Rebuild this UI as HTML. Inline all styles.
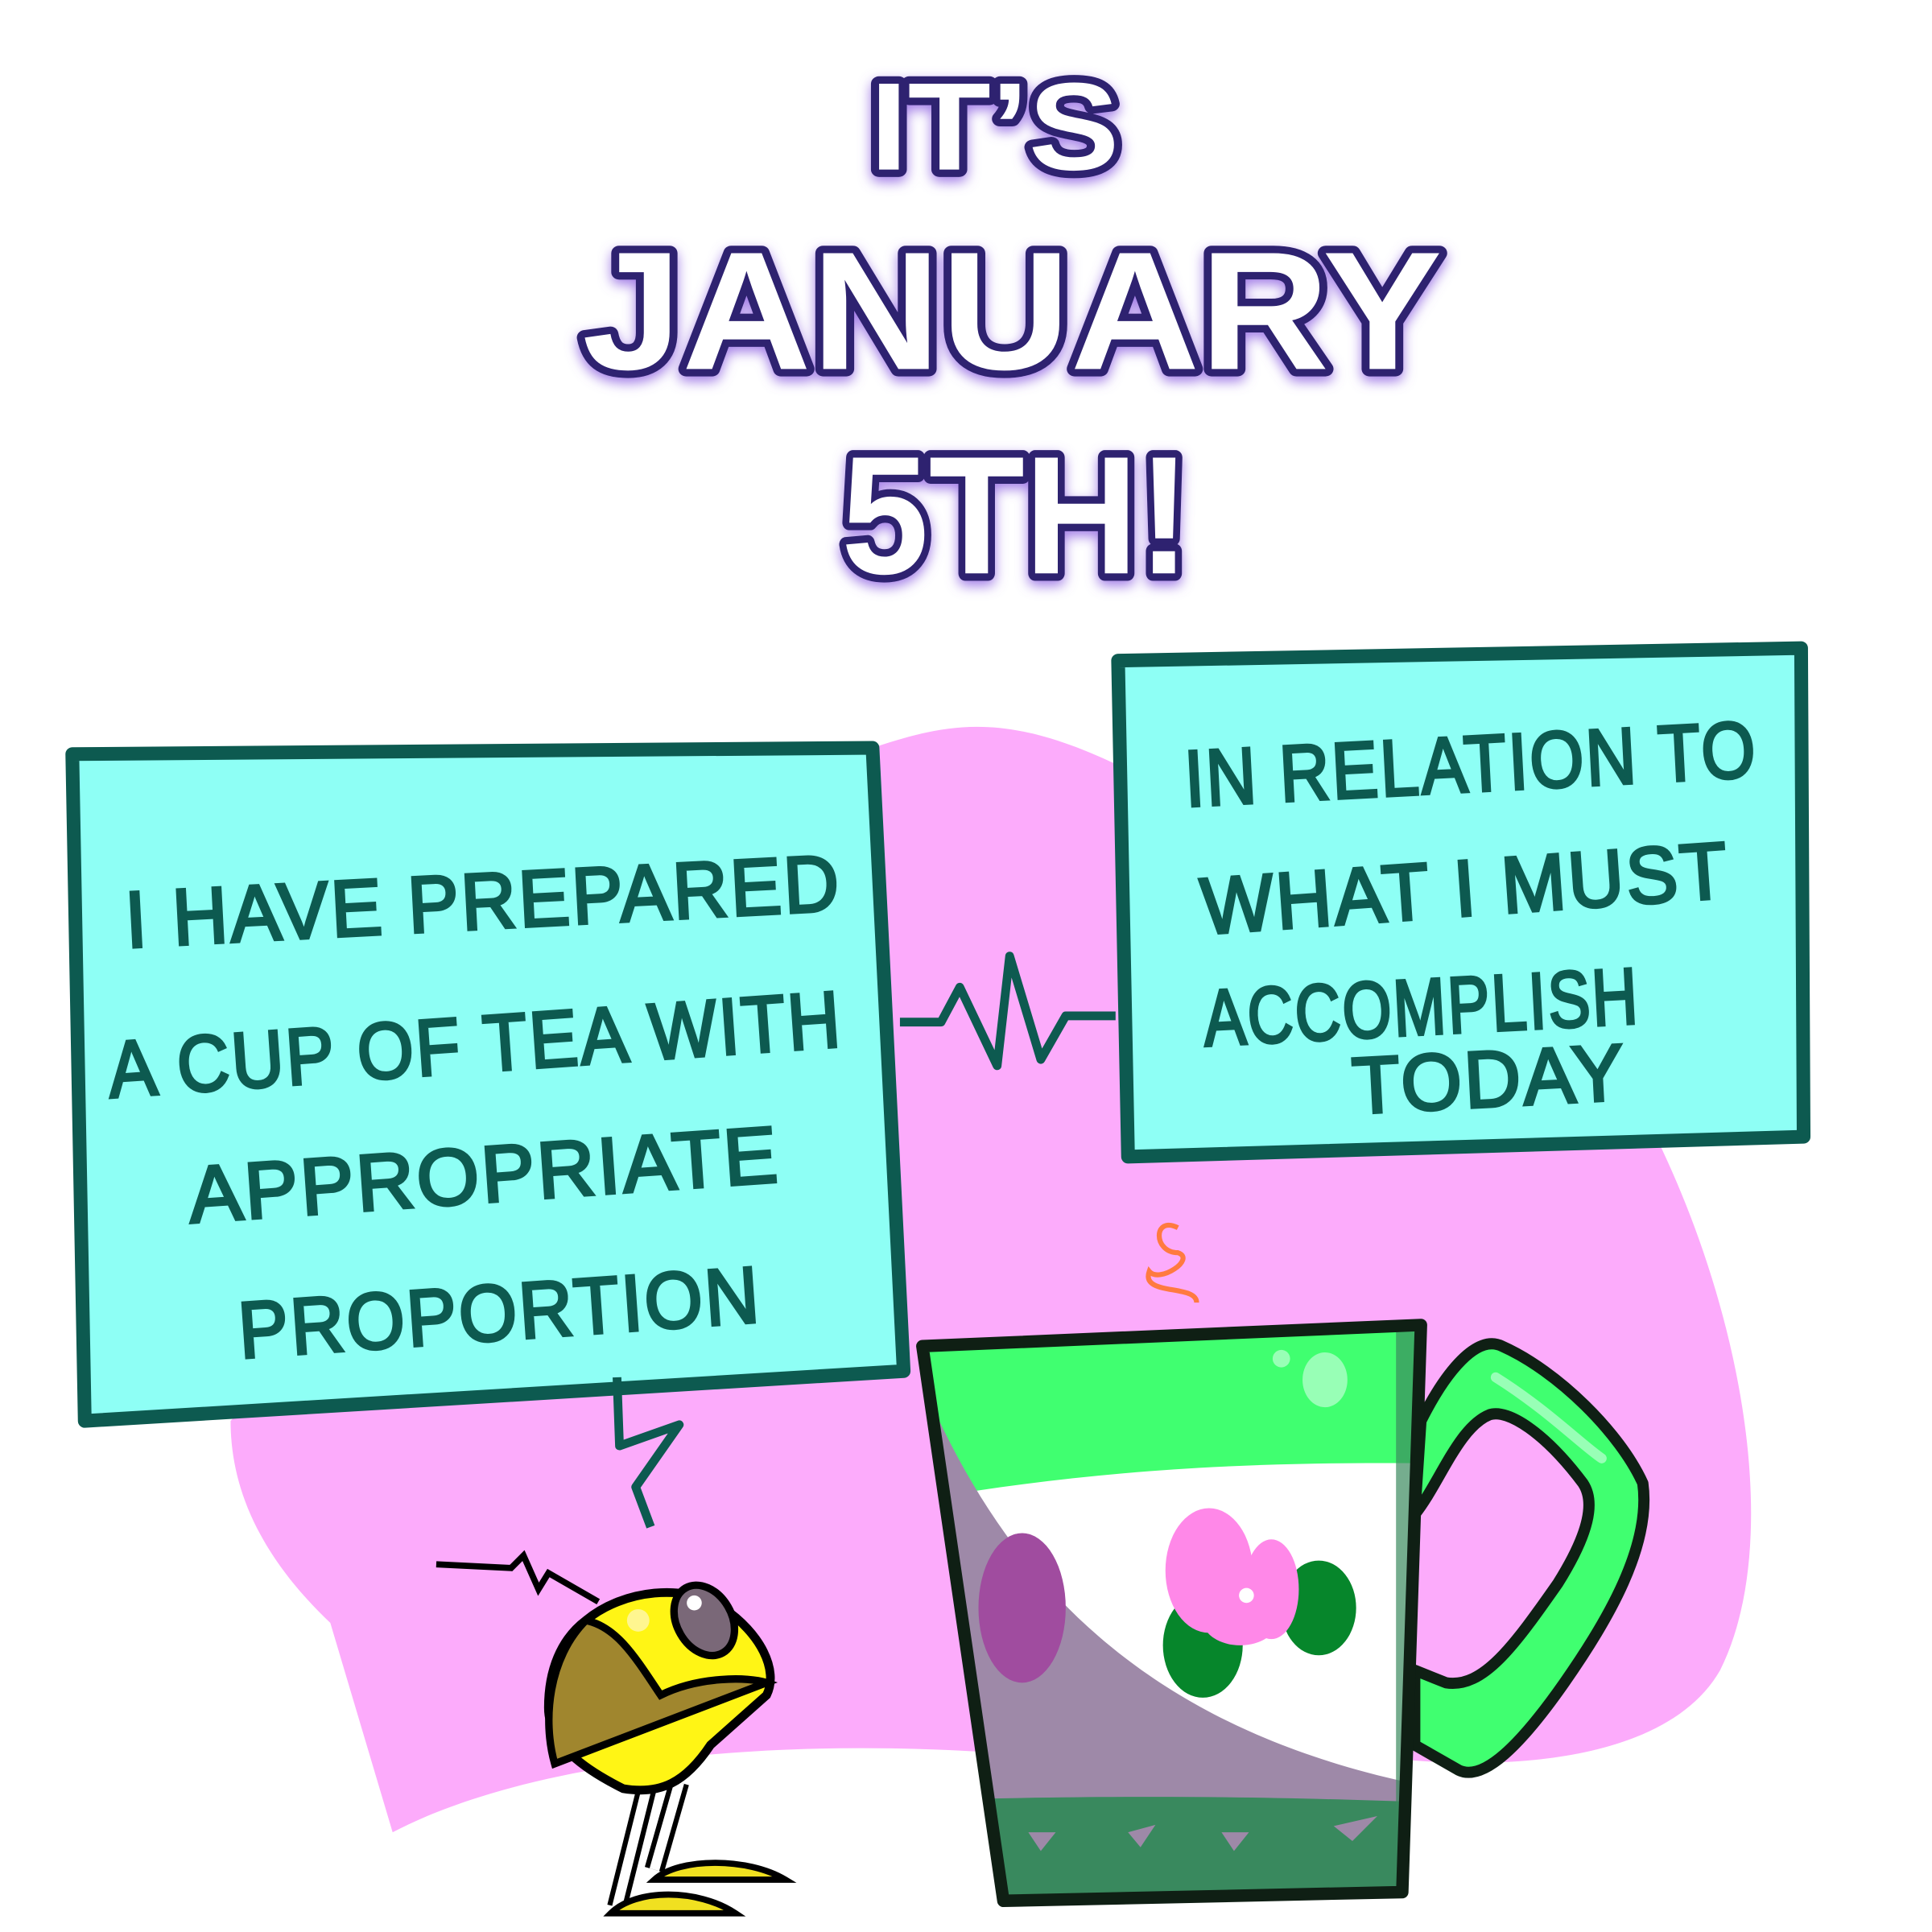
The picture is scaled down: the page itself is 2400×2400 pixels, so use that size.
<!DOCTYPE html>
<html><head><meta charset="utf-8"><style>
html,body{margin:0;padding:0;background:#fff;width:2400px;height:2400px;overflow:hidden}
svg{display:block}
.t{font-family:"Liberation Sans",sans-serif;font-weight:bold;fill:#fff;stroke:#2e2470;stroke-width:12;paint-order:stroke;stroke-linejoin:round}
.h{font-family:"Liberation Sans",sans-serif;fill:#0d5a50;stroke:#0d5a50;stroke-width:2.5;font-size:64px;letter-spacing:2px}
</style></head><body>
<svg width="2400" height="2400" viewBox="0 0 1550 1550" xmlns="http://www.w3.org/2000/svg">
<defs><filter id="g" x="-10%" y="-20%" width="120%" height="140%"><feDropShadow dx="0" dy="4" stdDeviation="5" flood-color="#8a5ce0" flood-opacity="0.8"/></filter></defs>
<g filter="url(#g)">
<text class="t" x="798" y="136" font-size="100" text-anchor="middle" textLength="200" lengthAdjust="spacingAndGlyphs">IT’S</text>
<text class="t" x="812" y="296" font-size="135" text-anchor="middle" textLength="690" lengthAdjust="spacingAndGlyphs">JANUARY</text>
<text class="t" x="815" y="460" font-size="135" text-anchor="middle" textLength="280" lengthAdjust="spacingAndGlyphs">5TH!</text>
</g>
<path d="M700 600 C820 560 880 565 1330 915 C1400 1060 1430 1240 1380 1340 C1340 1410 1220 1420 1130 1412 L780 1405 C600 1395 420 1415 315 1470 L265 1302 C205 1245 185 1190 185 1140 Z" fill="#fcabfb"/>
<polygon points="58,605 700,600 725,1100 68,1140" fill="#8efff5" stroke="#0d5a50" stroke-width="11" stroke-linejoin="round"/>
<polygon points="897,530 1445,520 1447,912 905,928" fill="#8efff5" stroke="#0d5a50" stroke-width="11" stroke-linejoin="round"/>
<path d="M722 820 L755 820 L770 792 L800 855 L810 767 L835 850 L855 815 L895 815" fill="none" stroke="#0d5a50" stroke-width="7" stroke-linejoin="round"/>
<path d="M495 1105 L497 1160 L545 1143 L510 1193 L522 1225" fill="none" stroke="#0d5a50" stroke-width="7" stroke-linejoin="round"/>
<g class="h">
<text x="100" y="745" transform="rotate(-3 390 720)" textLength="575" lengthAdjust="spacingAndGlyphs">I HAVE PREPARED</text>
<text x="85" y="860" transform="rotate(-4 380 820)" textLength="590" lengthAdjust="spacingAndGlyphs">A CUP OF TEA WITH</text>
<text x="150" y="965" transform="rotate(-4 380 930)" textLength="475" lengthAdjust="spacingAndGlyphs">APPROPRIATE</text>
<text x="190" y="1075" transform="rotate(-4 400 1040)" textLength="420" lengthAdjust="spacingAndGlyphs">PROPORTION</text>
<text x="950" y="635" transform="rotate(-3 1180 610)" textLength="460" lengthAdjust="spacingAndGlyphs">IN RELATION TO</text>
<text x="962" y="735" transform="rotate(-4 1170 700)" textLength="425" lengthAdjust="spacingAndGlyphs">WHAT I MUST</text>
<text x="965" y="830" transform="rotate(-3 1140 800)" textLength="350" lengthAdjust="spacingAndGlyphs">ACCOMPLISH</text>
<text x="1085" y="888" transform="rotate(-3 1190 870)" textLength="220" lengthAdjust="spacingAndGlyphs">TODAY</text>
</g>
<path d="M945 985 C925 975 925 1005 945 1005 C960 1010 930 1030 922 1020 C915 1040 960 1030 960 1045" fill="none" stroke="#ff7a40" stroke-width="4"/>
<path d="M1140 1140 C1160 1100 1185 1070 1205 1080 C1250 1100 1300 1150 1318 1190 C1325 1240 1290 1300 1255 1350 C1220 1400 1190 1430 1170 1420 L1135 1400 L1135 1340 L1160 1350 C1190 1355 1215 1320 1250 1270 C1275 1230 1280 1205 1270 1190 C1240 1150 1210 1130 1195 1135 C1170 1145 1155 1190 1135 1215 Z" fill="#40ff70" stroke="#0f1f14" stroke-width="9" stroke-linejoin="round"/>
<path d="M1200 1105 C1240 1130 1270 1160 1285 1170" stroke="#98ffb6" stroke-width="8" stroke-linecap="round" fill="none"/>
<clipPath id="mc"><polygon points="740,1080 1140,1063 1125,1518 805,1525"/></clipPath>
<g clip-path="url(#mc)">
<rect x="700" y="1050" width="500" height="500" fill="#40ff70"/>
<path d="M700 1210 C860 1180 1000 1170 1200 1175 L1200 1450 L700 1450 Z" fill="#fff"/>
<path d="M740 1110 C800 1250 900 1380 1130 1430 L1130 1450 L700 1450 Z" fill="#9e89a8"/>
<path d="M700 1445 C900 1440 1000 1440 1200 1448 L1200 1550 L700 1550 Z" fill="#39895e"/>
<rect x="1120" y="1060" width="30" height="400" fill="#3a8a5e" opacity="0.7"/>
</g>
<polygon points="740,1080 1140,1063 1125,1518 805,1525" fill="none" stroke="#0f1f14" stroke-width="10" stroke-linejoin="round"/>
<ellipse cx="1063" cy="1107" rx="18" ry="22" fill="#98ffb6"/><circle cx="1028" cy="1090" r="7" fill="#98ffb6"/>
<ellipse cx="1058" cy="1290" rx="30" ry="38" fill="#06862b"/><ellipse cx="965" cy="1320" rx="32" ry="42" fill="#06862b"/>
<ellipse cx="970" cy="1260" rx="35" ry="50" fill="#ff88e8"/><ellipse cx="1020" cy="1275" rx="22" ry="40" fill="#ff88e8"/><ellipse cx="995" cy="1300" rx="30" ry="20" fill="#ff88e8"/>
<circle cx="1000" cy="1280" r="6" fill="#fff"/>
<ellipse cx="820" cy="1290" rx="35" ry="60" fill="#a04c9f"/>
<g fill="#9e89a8"><path d="M825 1470 l10 15 l12 -15 z"/><path d="M905 1470 l10 12 l12 -18 z"/><path d="M980 1470 l10 15 l12 -15 z"/><path d="M1070 1465 l15 12 l20 -20 z"/></g>
<path d="M350 1255 L410 1258 L420 1248 L432 1275 L440 1262 L480 1285" fill="none" stroke="#000" stroke-width="5"/>
<path d="M520 1430 L495 1530 M545 1430 L525 1500" stroke="#000" stroke-width="16"/>
<path d="M520 1430 L495 1530 M545 1430 L525 1500" stroke="#fff" stroke-width="8"/>
<path d="M490 1535 C510 1515 560 1515 590 1535 Z" fill="#f0e020" stroke="#000" stroke-width="5"/>
<path d="M525 1508 C545 1490 600 1490 630 1508 Z" fill="#f0e020" stroke="#000" stroke-width="5"/>
<path d="M470 1300 C500 1275 550 1270 580 1290 C610 1310 625 1340 615 1360 L570 1400 C550 1430 530 1440 500 1435 C470 1420 440 1400 440 1370 C440 1340 450 1315 470 1300 Z" fill="#fff515" stroke="#000" stroke-width="7"/>
<path d="M470 1300 C440 1330 435 1380 445 1415 L615 1350 C600 1345 560 1345 530 1360 C510 1330 495 1305 470 1300 Z" fill="#a0862e" stroke="#000" stroke-width="6"/>
<ellipse cx="565" cy="1300" rx="22" ry="30" transform="rotate(-30 565 1300)" fill="#7a6878" stroke="#000" stroke-width="6"/>
<circle cx="557" cy="1286" r="6" fill="#fff"/>
<circle cx="512" cy="1300" r="9" fill="#fff690"/>
</svg>
</body></html>
